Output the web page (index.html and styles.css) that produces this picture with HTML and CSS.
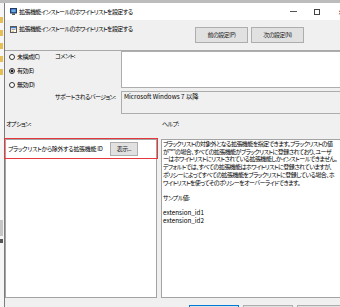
FILE: index.html
```html
<!DOCTYPE html>
<html lang="ja">
<head>
<meta charset="utf-8">
<title>拡張機能インストールのホワイトリストを設定する</title>
<link rel="stylesheet" href="styles.css">
</head>
<body>
<div class="topstrip"></div>
<div class="desk">
  <div class="behind">
    <span class="folder"></span>
    <span class="folder"></span>
    <span class="folder"></span>
    <span class="folder"></span>
    <span class="folder"></span>
    <span class="scrollbit"></span>
    <span class="darkbit"></span>
  </div>
  <div class="window">
    <div class="titlebar">
      <svg class="ticon" width="7" height="7" viewBox="0 0 7 7">
        <rect x="0.5" y="0.5" width="6" height="4.5" fill="#2f6fc4" stroke="#233a5e" stroke-width="1"/>
        <rect x="1.5" y="1.5" width="4" height="2.5" fill="#6fb0ea"/>
        <rect x="2" y="5.5" width="3" height="1.5" fill="#555"/>
      </svg>
      <span class="ttext">拡張機能インストールのホワイトリストを設定する</span>
      <div class="caption">
        <span class="cbtn"><span class="cmin"></span></span>
        <span class="cbtn"><span class="cmax"></span></span>
        <span class="cbtn cclose">✕</span>
      </div>
    </div>
    <div class="client">
      <div class="hdr">
        <div class="hdr-title">
          <svg class="sicon" width="7" height="7" viewBox="0 0 7 7">
            <rect x="0.5" y="0.5" width="6" height="6" fill="#fff" stroke="#5a5a5a" stroke-width="1"/>
            <rect x="1" y="1" width="5" height="1.3" fill="#3a78c8"/>
            <rect x="1.5" y="3.2" width="4" height="0.8" fill="#8a8a8a"/>
            <rect x="1.5" y="4.8" width="2.5" height="0.8" fill="#c9a23a"/>
          </svg>
          <span>拡張機能インストールのホワイトリストを設定する</span>
        </div>
        <div class="hdr-btns">
          <button class="btn navbtn">前の設定(P)</button>
          <button class="btn navbtn">次の設定(N)</button>
        </div>
      </div>
      <div class="settings">
        <div class="radios">
          <label class="radio"><span class="rcircle"></span>未構成(C)</label>
          <label class="radio"><span class="rcircle on"></span>有効(E)</label>
          <label class="radio"><span class="rcircle"></span>無効(D)</label>
        </div>
        <div class="fields">
          <div class="flabel l1">コメント:</div>
          <div class="commentbox"></div>
          <div class="flabel l2">サポートされるバージョン:</div>
          <div class="supportbox">Microsoft Windows 7 以降</div>
        </div>
      </div>
      <div class="sections">
        <span class="sec-opt">オプション:</span>
        <span class="sec-help">ヘルプ:</span>
      </div>
      <div class="panels">
        <div class="opt-panel">
          <div class="opt-row">
            <span class="opt-label">ブラックリストから除外する拡張機能 ID</span>
            <button class="btn showbtn">表示...</button>
          </div>
          <div class="annot"></div>
        </div>
        <div class="help-panel">
          <p>ブラックリストの対象外となる拡張機能を指定できます。ブラックリストの値<br>が"*"の場合、すべての拡張機能がブラックリストに登録されており、ユーザ<br>ーはホワイトリストにリストされている拡張機能しかインストールできません。<br>デフォルトでは、すべての拡張機能はホワイトリストに登録されていますが、<br>ポリシーによってすべての拡張機能をブラックリストに登録している場合、ホ<br>ワイトリストを使ってそのポリシーをオーバーライドできます。</p>
          <p>サンプル値:</p>
          <p class="lat">extension_id1<br>extension_id2</p>
        </div>
      </div>
      <div class="footer">
        <button class="btn fbtn ok">OK</button>
        <button class="btn fbtn">キャンセル</button>
        <button class="btn fbtn">適用(A)</button>
      </div>
    </div>
  </div>
</div>
</body>
</html>
```

FILE: styles.css
```css
* { box-sizing: border-box; margin: 0; padding: 0; }
html, body { width: 340px; height: 307px; overflow: hidden; }
body {
  background: #fff;
  font-family: "Noto Sans CJK JP", "Noto Sans", sans-serif;
  font-size: 6px;
  line-height: 8px;
  letter-spacing: -0.55px;
  color: #000;
  font-feature-settings: "palt";
}
.lat { font-size: 6.3px; letter-spacing: 0; }
.topstrip { height: 3px; background: #bcbcbc; }
.desk { display: flex; height: 304px; }

.behind {
  width: 4px; flex: none; background: #f6f6f6;
  display: flex; flex-direction: column; gap: 7px; padding-top: 14px;
}
.folder { display: block; width: 3px; height: 6px; background: #e6bf55; }
.scrollbit { display: block; width: 3px; height: 16px; background: #c6c6c6; margin-top: 138px; }
.darkbit { display: block; width: 3px; height: 4px; background: #555; margin-top: -4px; }

.window {
  width: 349px; flex: none;
  border-left: 1px solid #7c7c7c;
  display: flex; flex-direction: column;
  background: #f0f0f0;
}
.titlebar {
  height: 17px; flex: none; background: #fff;
  display: flex; align-items: center; padding-left: 5px;
}
.ticon { flex: none; margin-right: 2px; }
.ttext { white-space: nowrap; }
.caption { margin-left: auto; display: flex; height: 17px; }
.cbtn { width: 24px; display: flex; align-items: center; justify-content: center; }
.cmin { width: 7px; height: 1px; background: #555; }
.cmax { width: 6px; height: 6px; border: 1px solid #444; }
.cclose { font-size: 7px; color: #333; letter-spacing: 0; }

.client { flex: 1; display: flex; flex-direction: column; }
.hdr {
  height: 31px; flex: none;
  display: flex; align-items: flex-start;
  padding: 5px 49px 0 5px;
  border-bottom: 1px solid #a9a9a9;
}
.hdr-title { display: flex; align-items: center; gap: 2px; height: 8px; white-space: nowrap; }
.sicon { flex: none; }
.hdr-btns { margin-left: auto; display: flex; gap: 3px; margin-top: 2px; }
.btn {
  font: inherit; color: #222; letter-spacing: inherit;
  background: #e1e1e1; border: 1px solid #adadad;
  display: flex; align-items: center; justify-content: center;
  white-space: nowrap;
}
.navbtn { width: 53px; height: 16px; }

.settings { height: 63px; flex: none; display: flex; }
.radios {
  width: 50px; flex: none; padding-left: 4px;
  display: flex; flex-direction: column; gap: 3px;
}
.radio { height: 11px; display: flex; align-items: center; white-space: nowrap; }
.rcircle {
  width: 6px; height: 6px; border: 1px solid #333; border-radius: 50%;
  background: #fff; margin-right: 2px; flex: none;
}
.rcircle.on { background: radial-gradient(circle, #1a1a1a 0 1.3px, #fff 1.7px); }
.fields {
  flex: 1; display: grid;
  grid-template-columns: 66px 1fr;
  grid-template-rows: 37px 23px;
  row-gap: 3px; padding-right: 6px;
}
.flabel { white-space: nowrap; }
.l1 { padding-top: 1px; }
.l2 { padding-top: 2px; }
.commentbox { background: #fff; border: 1px solid #adadad; }
.supportbox {
  background: #f0f0f0; border: 1px solid #adadad;
  padding: 1px 2px; white-space: nowrap;
  font-size: 6.3px; letter-spacing: 0;
}

.sections { height: 25px; flex: none; display: flex; padding: 6px 0 0 1px; }
.sec-opt { width: 156px; }

.panels { height: 159px; flex: none; display: flex; gap: 4px; }
.opt-panel {
  width: 152px; flex: none; position: relative;
  background: #fff; border: 1px solid #a3a3a3;
}
.opt-row { display: flex; align-items: center; padding: 2px 0 0 2px; white-space: nowrap; }
.opt-label { width: 102px; letter-spacing: -0.3px; }
.showbtn { width: 28px; height: 14px; }
.annot {
  position: absolute; left: -2px; top: -2px; width: 154px; height: 21px;
  border: 1.5px solid #e6383c;
}
.help-panel {
  flex: 1; background: #fff; border: 1px solid #a3a3a3;
  padding: 0 1px; line-height: 7.7px; white-space: nowrap;
  margin-right: 6px;
}
.help-panel p + p { margin-top: 7.7px; }

.footer {
  height: 34px; flex: none;
  display: flex; justify-content: flex-end; gap: 4px;
  padding: 7px 6px 0 0;
}
.fbtn { width: 50px; height: 26px; }
.ok { border-color: #0078d7; }
```
